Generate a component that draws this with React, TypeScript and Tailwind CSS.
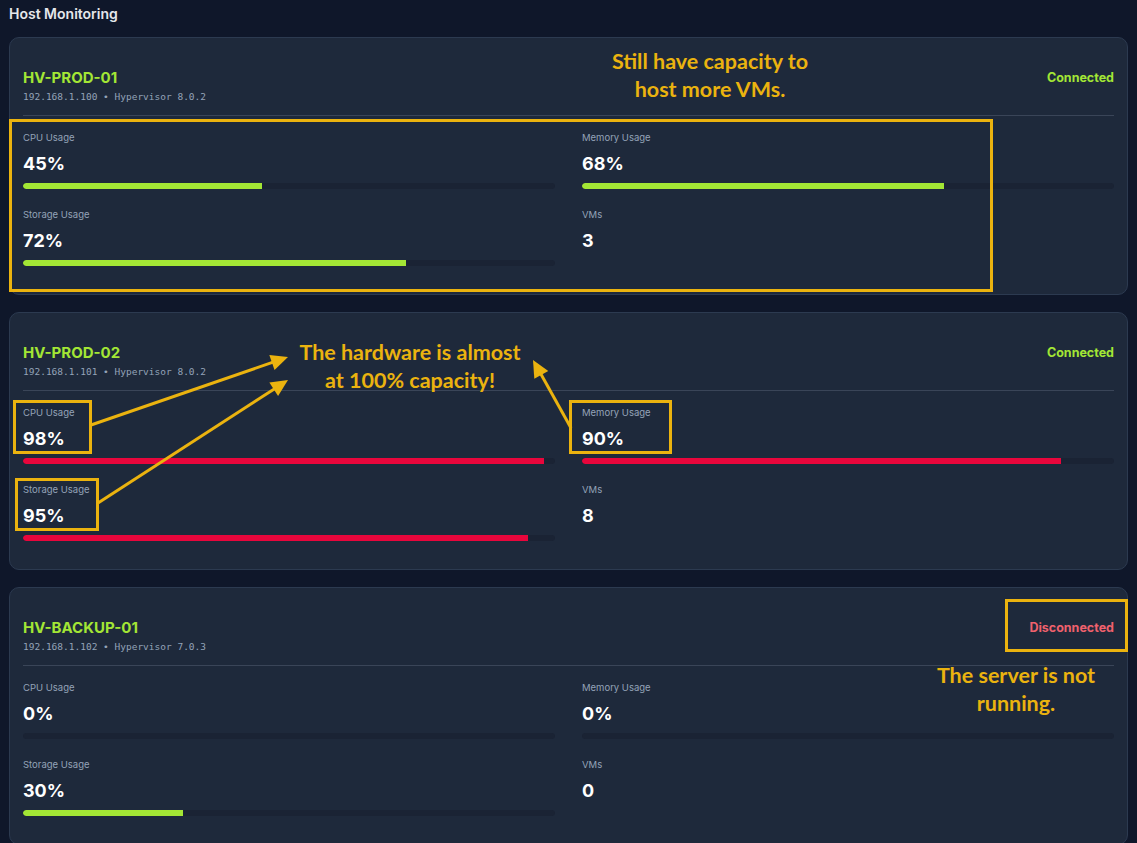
const YELLOW = "#ebb30f";

interface Metric {
  label: string;
  value: number;
  showBar: boolean;
  suffix?: string;
}

interface Host {
  name: string;
  info: string;
  connected: boolean;
  metrics: Metric[];
}

const hosts: Host[] = [
  {
    name: "HV-PROD-01",
    info: "192.168.1.100 • Hypervisor 8.0.2",
    connected: true,
    metrics: [
      { label: "CPU Usage", value: 45, showBar: true, suffix: "%" },
      { label: "Memory Usage", value: 68, showBar: true, suffix: "%" },
      { label: "Storage Usage", value: 72, showBar: true, suffix: "%" },
      { label: "VMs", value: 3, showBar: false },
    ],
  },
  {
    name: "HV-PROD-02",
    info: "192.168.1.101 • Hypervisor 8.0.2",
    connected: true,
    metrics: [
      { label: "CPU Usage", value: 98, showBar: true, suffix: "%" },
      { label: "Memory Usage", value: 90, showBar: true, suffix: "%" },
      { label: "Storage Usage", value: 95, showBar: true, suffix: "%" },
      { label: "VMs", value: 8, showBar: false },
    ],
  },
  {
    name: "HV-BACKUP-01",
    info: "192.168.1.102 • Hypervisor 7.0.3",
    connected: false,
    metrics: [
      { label: "CPU Usage", value: 0, showBar: true, suffix: "%" },
      { label: "Memory Usage", value: 0, showBar: true, suffix: "%" },
      { label: "Storage Usage", value: 30, showBar: true, suffix: "%" },
      { label: "VMs", value: 0, showBar: false },
    ],
  },
];

const MetricBlock = ({ metric }: { metric: Metric }) => {
  const high = metric.value >= 85;
  return (
    <div className="flex flex-col">
      <span className="text-[9.5px] leading-[14px] text-[#94a3b8]">{metric.label}</span>
      <span className="mt-[7px] text-[18px] font-bold leading-[24px] text-white">
        {metric.value}
        {metric.suffix}
      </span>
      {metric.showBar ? (
        <div className="mt-[7px] h-[6px] w-full overflow-hidden rounded-full bg-[#1a2334]">
          <div className={high ? "h-full rounded-l-full bg-[#e8063c]" : "h-full rounded-l-full bg-[#a3e635]"} style={{ width: `${metric.value}%` }} />
        </div>
      ) : (
        <div className="mt-[7px] h-[6px]" />
      )}
    </div>
  );
};

const HostCard = ({ host }: { host: Host }) => {
  return (
    <div className="h-[258px] shrink-0 rounded-[10px] border border-[#2c3a50] bg-[#1e293b] px-[13px] pt-[30px]">
      <div className="flex items-start justify-between">
        <div className="flex flex-col">
          <span className="text-[15px] font-bold leading-[20px] text-[#a3e635]">{host.name}</span>
          <span className="mt-[2px] font-['DejaVu_Sans_Mono',monospace] text-[9.5px] leading-[14px] text-[#94a3b8]">{host.info}</span>
        </div>
        <span className={host.connected ? "text-[12.5px] font-bold leading-[20px] text-[#a3e635]" : "text-[12.5px] font-bold leading-[20px] text-[#f0616d]"}>
          {host.connected ? "Connected" : "Disconnected"}
        </span>
      </div>
      <div className="mt-[11px] h-px bg-[#3a4558]" />
      <div className="mt-[15px] grid grid-cols-2 gap-x-[27px] gap-y-[19px]">
        {host.metrics.map((m) => (
          <MetricBlock key={m.label} metric={m} />
        ))}
      </div>
    </div>
  );
};

const arrow = (x1: number, y1: number, x2: number, y2: number) => {
  const dx = x2 - x1;
  const dy = y2 - y1;
  const len = Math.sqrt(dx * dx + dy * dy);
  const ux = dx / len;
  const uy = dy / len;
  const headLen = 17;
  const headW = 8;
  const bx = x2 - ux * headLen;
  const by = y2 - uy * headLen;
  const px = -uy * headW;
  const py = ux * headW;
  return (
    <g key={`${x1}-${y1}`}>
      <line x1={x1} y1={y1} x2={bx + ux * 2} y2={by + uy * 2} stroke={YELLOW} strokeWidth={3} />
      <polygon points={`${x2},${y2} ${bx + px},${by + py} ${bx - px},${by - py}`} fill={YELLOW} />
    </g>
  );
};

const Annotations = () => {
  return (
    <div className="pointer-events-none absolute inset-0">
      <svg width="1137" height="843" className="absolute left-0 top-0">
        <g fill="none" stroke={YELLOW} strokeWidth={3}>
          <rect x={10.5} y={120.5} width={981} height={170} />
          <rect x={14.5} y={401.5} width={76} height={51} />
          <rect x={16.5} y={479.5} width={81} height={50} />
          <rect x={570.5} y={401.5} width={100} height={51} />
          <rect x={1006.5} y={600.5} width={120} height={50} />
        </g>
        {arrow(91, 425, 288, 357)}
        {arrow(98, 503, 288, 380)}
        {arrow(571, 428, 533, 360)}
      </svg>
      <div className="absolute left-[560px] top-[47px] w-[300px] text-center font-['Lato',sans-serif] text-[21.5px] font-bold leading-[28px]" style={{ color: YELLOW }}>
        Still have capacity to
        <br />
        host more VMs.
      </div>
      <div className="absolute left-[260px] top-[338px] w-[300px] text-center font-['Lato',sans-serif] text-[21.5px] font-bold leading-[28px]" style={{ color: YELLOW }}>
        The hardware is almost
        <br />
        at 100% capacity!
      </div>
      <div className="absolute left-[916px] top-[661px] w-[200px] text-center font-['Lato',sans-serif] text-[21.5px] font-bold leading-[28px]" style={{ color: YELLOW }}>
        The server is not
        <br />
        running.
      </div>
    </div>
  );
};

const App = () => {
  return (
    <div className="relative h-[843px] overflow-hidden bg-[#0f172a] px-[9px] pt-[4px] font-['Inter',sans-serif]">
      <h1 className="text-[14px] font-semibold leading-[20px] text-[#e5e7eb]">Host Monitoring</h1>
      <div className="mt-[13px] flex flex-col gap-[17px]">
        {hosts.map((h) => (
          <HostCard key={h.name} host={h} />
        ))}
      </div>
      <Annotations />
    </div>
  );
};

export default App;
